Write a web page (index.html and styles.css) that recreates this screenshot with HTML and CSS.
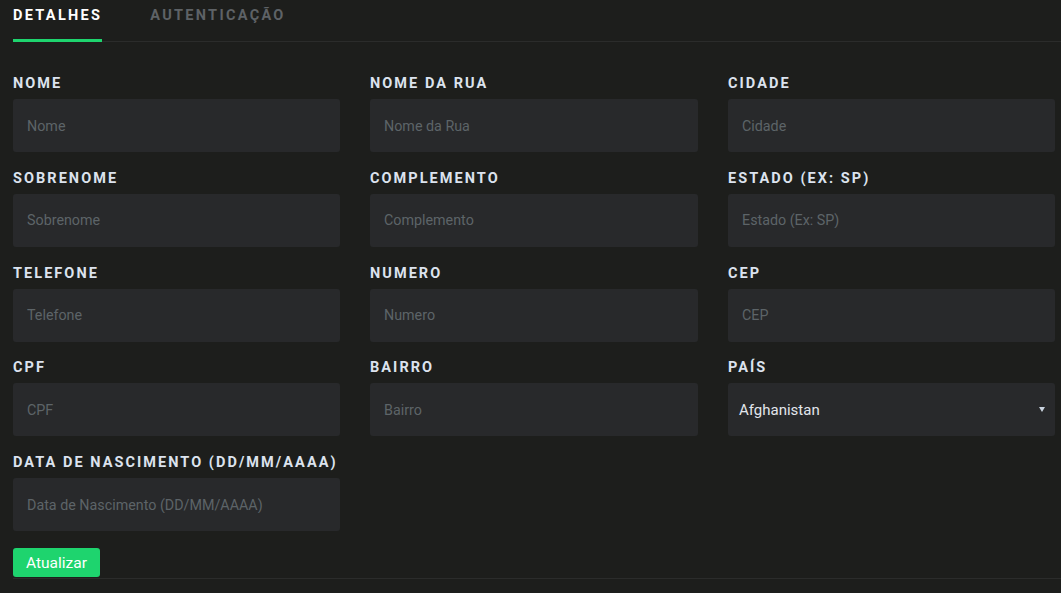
FILE: index.html
```html
<!DOCTYPE html>
<html lang="pt">
<head>
<meta charset="utf-8">
<title>Perfil</title>
<link rel="stylesheet" href="styles.css">
</head>
<body>
<div class="page">
  <nav class="tabs">
    <a class="tab active">DETALHES</a>
    <a class="tab">AUTENTICAÇÃO</a>
  </nav>
  <form class="form">
    <div class="grid">
      <div class="field"><label>NOME</label><input placeholder="Nome"></div>
      <div class="field"><label>NOME DA RUA</label><input placeholder="Nome da Rua"></div>
      <div class="field"><label>CIDADE</label><input placeholder="Cidade"></div>

      <div class="field"><label>SOBRENOME</label><input placeholder="Sobrenome"></div>
      <div class="field"><label>COMPLEMENTO</label><input placeholder="Complemento"></div>
      <div class="field"><label>ESTADO (EX: SP)</label><input placeholder="Estado (Ex: SP)"></div>

      <div class="field"><label>TELEFONE</label><input placeholder="Telefone"></div>
      <div class="field"><label>NUMERO</label><input placeholder="Numero"></div>
      <div class="field"><label>CEP</label><input placeholder="CEP"></div>

      <div class="field"><label>CPF</label><input placeholder="CPF"></div>
      <div class="field"><label>BAIRRO</label><input placeholder="Bairro"></div>
      <div class="field"><label>PAÍS</label>
        <div class="select"><span>Afghanistan</span><span class="caret"></span></div>
      </div>

      <div class="field"><label>DATA DE NASCIMENTO (DD/MM/AAAA)</label><input placeholder="Data de Nascimento (DD/MM/AAAA)"></div>
    </div>
    <div class="actions"><button type="button" class="btn">Atualizar</button></div>
  </form>
</div>
</body>
</html>
```
FILE: styles.css
```css
* { box-sizing: border-box; }
html, body { margin: 0; padding: 0; background: #1d1e1c; height: 100%; }
body { font-family: Roboto, "Liberation Sans", sans-serif; color: #dce3ee; overflow: hidden; }
.page { padding-left: 13px; }
.tabs {
  display: flex;
  gap: 48px;
  border-bottom: 1px solid #2b2c2b;
  height: 42px;
}
.tab {
  font-size: 14.5px;
  font-weight: 700;
  letter-spacing: 2.3px;
  color: #5e6266;
  padding-top: 7px;
  height: 42px;
  margin-bottom: -1px;
}
.tab.active {
  color: #ffffff;
  border-bottom: 3px solid #1ed46e;
}
.form { padding-top: 33px; border-bottom: 1px solid #2b2c2b; }
.grid {
  display: grid;
  grid-template-columns: 327px 328px 327px;
  column-gap: 30px;
  row-gap: 17.75px;
}
.field { display: flex; flex-direction: column; }
.field label {
  font-size: 14.5px;
  font-weight: 700;
  letter-spacing: 2.05px;
  color: #dce3ee;
  line-height: 17px;
  margin-bottom: 7px;
  white-space: nowrap;
}
.field input, .select {
  height: 53px;
  background: #28292b;
  border: none;
  border-radius: 3px;
  padding: 0 14px;
  font-family: Roboto, "Liberation Sans", sans-serif;
  font-size: 14.3px;
  color: #e0e4ea;
  outline: none;
}
.field input::placeholder { color: #5d6468; }
.select {
  display: flex;
  align-items: center;
  justify-content: space-between;
  padding: 0 10px 0 11px;
  font-size: 15px;
  color: #e2e6ec;
}
.caret {
  width: 0; height: 0;
  border-left: 3px solid transparent;
  border-right: 3px solid transparent;
  border-top: 5px solid #c9d3df;
}
.actions { padding: 17px 0 1px; }
.btn {
  background: #1ed46e;
  color: #ffffff;
  border: none;
  border-radius: 3px;
  font-family: Roboto, "Liberation Sans", sans-serif;
  font-size: 15.5px;
  width: 87px;
  height: 29px;
  padding: 0;
}
```
